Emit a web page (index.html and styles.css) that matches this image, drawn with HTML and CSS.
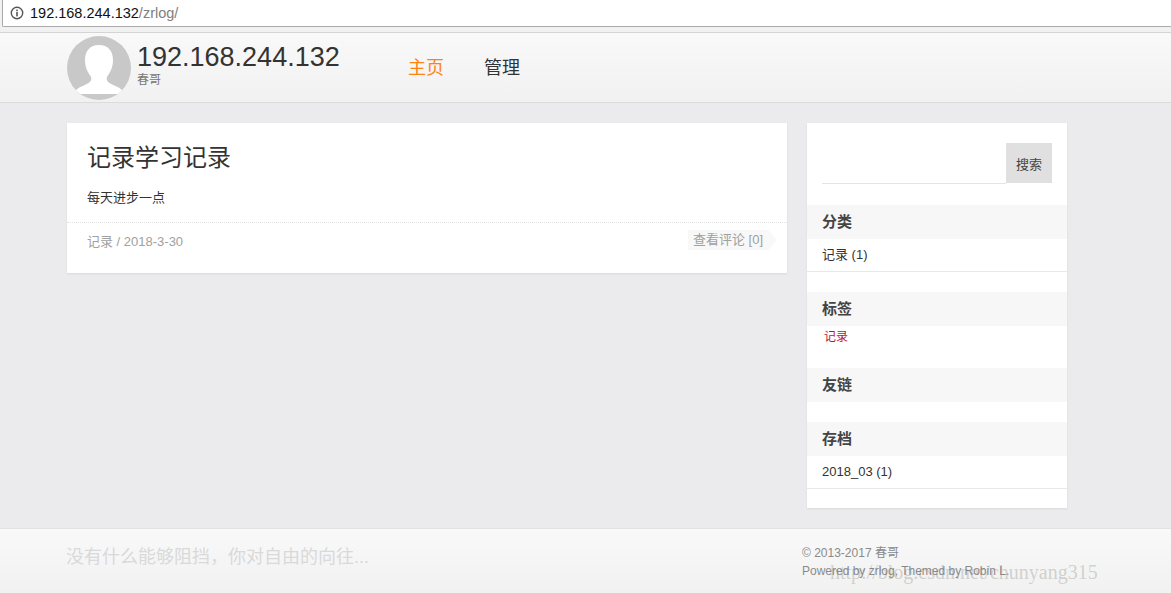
FILE: index.html
```html
<!DOCTYPE html>
<html lang="zh-CN">
<head>
    <meta charset="UTF-8">
    <title>192.168.244.132</title>
    <link rel="stylesheet" href="styles.css">
</head>
<body>
    <div class="browser-bar">
        <div class="address">
            <svg class="info-icon" width="14" height="14" viewBox="0 0 14 14">
                <circle cx="7" cy="7" r="5.7" fill="none" stroke="#555" stroke-width="1.4"/>
                <rect x="6.2" y="6" width="1.6" height="4.4" fill="#555"/>
                <rect x="6.2" y="3.6" width="1.6" height="1.6" fill="#555"/>
            </svg>
            <span class="host">192.168.244.132</span><span class="path">/zrlog/</span>
        </div>
    </div>

    <header class="site-header">
        <div class="brand">
            <svg class="avatar" width="64" height="64" viewBox="0 0 64 64">
                <defs><clipPath id="avatar-clip"><circle cx="32" cy="32" r="32"/></clipPath></defs>
                <circle cx="32" cy="32" r="32" fill="#c9c8c9"/>
                <path clip-path="url(#avatar-clip)" fill="#fff" d="M32 9c-9 0-14 6-14 15 0 7 2.500 12 5.500 16 1.500 2.500 1 5-2 7-4 2.500-9 3.500-12.500 7-1.500 1.500-2 3-2.500 4h51c-.5-1-1-2.500-2.500-4-3.500-3.500-8.500-4.500-12.500-7-3-2-3.500-4.500-2-7 3-4 5.500-9 5.500-16 0-9-5-15-14-15z"/>
            </svg>
            <div class="brand-text">
                <h1>192.168.244.132</h1>
                <p>春哥</p>
            </div>
        </div>
        <nav class="main-nav">
            <a class="active" href="#">主页</a>
            <a href="#">管理</a>
        </nav>
    </header>

    <main class="content">
        <article class="post">
            <div class="post-body">
                <h2>记录学习记录</h2>
                <p>每天进步一点</p>
            </div>
            <div class="post-meta">
                <span>记录 / 2018-3-30</span>
                <a class="comments" href="#">查看评论 [0]</a>
            </div>
        </article>

        <aside class="sidebar">
            <form class="search">
                <input type="text">
                <button type="button">搜索</button>
            </form>
            <section class="widget">
                <h3>分类</h3>
                <div class="row">记录 (1)</div>
            </section>
            <section class="widget">
                <h3>标签</h3>
                <div class="tags"><a href="#">记录</a></div>
            </section>
            <section class="widget">
                <h3>友链</h3>
                <div class="empty"></div>
            </section>
            <section class="widget">
                <h3>存档</h3>
                <div class="row">2018_03 (1)</div>
            </section>
        </aside>
    </main>

    <footer class="site-footer">
        <div class="slogan">没有什么能够阻挡，你对自由的向往...</div>
        <div class="copyright">
            <p>© 2013-2017 春哥</p>
            <p>Powered by zrlog, Themed by Robin L.</p>
        </div>
    </footer>

    <div class="watermark">http://blog.csdn.net/chunyang315</div>
</body>
</html>
```

FILE: styles.css
```css
* {
    box-sizing: border-box;
}

html, body {
    height: 100%;
}

body {
    font-family: "Liberation Sans", "Noto Sans CJK SC", sans-serif;
    background-color: #ebebed;
    color: #333333;
    margin: 0;
    display: flex;
    flex-direction: column;
    overflow: hidden;
    position: relative;
}

p, h1, h2, h3 {
    margin: 0;
}

a {
    text-decoration: none;
}

.browser-bar {
    height: 33px;
    padding: 0 0 5px 2px;
    background-color: #f1f1f1;
    border-bottom: 1px solid #d4d4d4;
}

.address {
    height: 27px;
    display: flex;
    align-items: center;
    padding-left: 7px;
    background: #ffffff;
    border: 1px solid #aaaaaa;
    border-top: none;
    border-right: none;
    border-radius: 0 0 0 2px;
    font-size: 14.5px;
}

.info-icon {
    margin-right: 6px;
}

.host {
    color: #111111;
}

.path {
    color: #808080;
}

.site-header {
    height: 70px;
    padding-left: 67px;
    display: flex;
    background: linear-gradient(#f9f9f9, #f1f1f1);
    border-bottom: 1px solid #dcdcdc;
}

.brand {
    width: 321px;
    padding-top: 3px;
    display: flex;
}

.avatar {
    flex: none;
}

.brand-text {
    margin-left: 6px;
    padding-top: 5px;
}

.brand-text h1 {
    font-size: 27px;
    font-weight: 400;
    line-height: 32px;
    color: #333333;
}

.brand-text p {
    font-size: 12px;
    line-height: 14px;
    color: #777777;
}

.main-nav {
    display: flex;
    gap: 40px;
    padding: 22px 0 0 20px;
    font-size: 18px;
    line-height: 26px;
}

.main-nav a {
    color: #333333;
}

.main-nav a.active {
    color: #ff8214;
}

.content {
    flex: 1;
    padding: 20px 0 0 67px;
    display: flex;
    align-items: flex-start;
    gap: 20px;
}

.post {
    width: 720px;
    height: 150px;
    background: #ffffff;
    box-shadow: 0 1px 2px rgba(0, 0, 0, 0.08);
}

.post-body {
    height: 100px;
    padding: 19px 20px 0;
    border-bottom: 1px dotted #e2e2e2;
}

.post-body h2 {
    font-size: 24px;
    font-weight: 400;
    line-height: 32px;
    color: #333333;
}

.post-body p {
    margin-top: 14px;
    font-size: 13px;
    line-height: 20px;
    color: #333333;
}

.post-meta {
    display: flex;
    justify-content: space-between;
    align-items: center;
    padding: 7px 11px 0 20px;
    font-size: 13px;
    color: #a0a0a0;
}

.comments {
    position: relative;
    height: 20px;
    line-height: 20px;
    padding: 0 5px;
    margin-right: 8px;
    color: #a0a0a0;
    background: #f8f8f8;
}

.comments::after {
    content: "";
    position: absolute;
    left: 100%;
    top: 0;
    border-left: 9px solid #f8f8f8;
    border-top: 10px solid transparent;
    border-bottom: 10px solid transparent;
}

.sidebar {
    width: 260px;
    height: 385px;
    background: #ffffff;
    box-shadow: 0 1px 2px rgba(0, 0, 0, 0.08);
    padding-top: 20px;
}

.search {
    display: flex;
    margin: 0 15px 21px;
}

.search input {
    flex: 1;
    min-width: 0;
    height: 41px;
    border: none;
    border-bottom: 1px solid #e4e4e4;
    outline: none;
}

.search button {
    width: 46px;
    height: 40px;
    padding: 0;
    border: none;
    background: #e0e0e0;
    color: #444444;
    font-family: inherit;
    font-size: 13px;
}

.widget h3 {
    height: 34px;
    padding-left: 15px;
    font-size: 15px;
    line-height: 33px;
    font-weight: 700;
    color: #444444;
    background: #f7f7f7;
}

.row {
    height: 33px;
    margin-bottom: 20px;
    padding-left: 15px;
    font-size: 13px;
    line-height: 31px;
    color: #333333;
    border-bottom: 1px solid #e8e8e8;
}

.tags {
    height: 42px;
    padding-left: 17px;
    font-size: 12px;
    line-height: 22px;
}

.tags a {
    color: #c4122f;
}

.empty {
    height: 20px;
}

.site-footer {
    height: 65px;
    padding-left: 66px;
    display: flex;
    background: linear-gradient(#f9f9f9, #f1f1f1);
    border-top: 1px solid #e2e2e2;
}

.slogan {
    width: 736px;
    padding-top: 15px;
    font-size: 18px;
    line-height: 26px;
    color: #d9d9d9;
}

.copyright {
    padding-top: 15px;
    font-size: 12px;
    line-height: 18px;
    color: #8a8a8a;
}

.watermark {
    position: absolute;
    left: 830px;
    top: 561px;
    font-family: "Liberation Serif", serif;
    font-size: 20px;
    white-space: nowrap;
    color: rgba(120, 120, 110, 0.3);
    pointer-events: none;
}
```
